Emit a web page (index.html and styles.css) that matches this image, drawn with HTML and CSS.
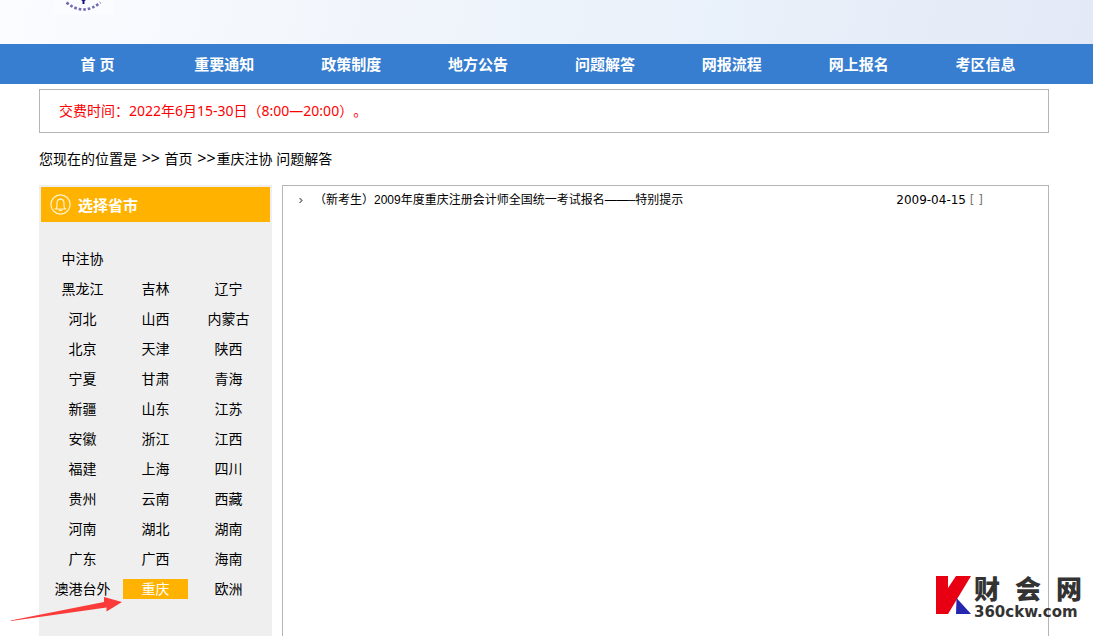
FILE: index.html
```html
<!DOCTYPE html>
<html lang="zh-CN">
<head>
<meta charset="utf-8">
<meta name="viewport" content="width=device-width, initial-scale=1">
<title>重庆注协 问题解答</title>
<link rel="stylesheet" href="styles.css">
</head>
<body>
<header class="banner">
  <svg class="emblem" width="60" height="14" viewBox="0 0 60 14" aria-hidden="true">
    <rect width="60" height="14" fill="#fbfcff"/>
    <path d="M12.500 2.500 Q29.500 16.500 46.500 2.500" fill="none" stroke="#6e6bb0" stroke-width="2.600" stroke-dasharray="2.600 2"/>
    <path d="M27 0h5l-1.500 1v3h-2V1z" fill="#16107c"/>
  </svg>
</header>
<nav class="nav">
  <a href="#">首 页</a>
  <a href="#">重要通知</a>
  <a href="#">政策制度</a>
  <a href="#">地方公告</a>
  <a href="#">问题解答</a>
  <a href="#">网报流程</a>
  <a href="#">网上报名</a>
  <a href="#">考区信息</a>
</nav>
<div class="page">
  <p class="notice">交费时间：2022年6月15-30日（8:00—20:00）。</p>
  <p class="crumbs">您现在的位置是 <span class="sep">&gt;&gt;</span> <a href="#">首页</a> <span class="sep">&gt;&gt;</span>重庆注协 问题解答</p>
  <div class="columns">
    <aside class="sidebar">
      <h2 class="sidebar-title">
        <svg width="21" height="21" viewBox="0 0 21 21" fill="none" stroke="#fff3cf" stroke-width="1.200" aria-hidden="true">
          <circle cx="10.500" cy="10.500" r="9.600"/>
          <path d="M4.500 15h12M6 15c1-1 1-2 1-5.500 0-2.500 1.300-4.300 3.500-4.300S14 7 14 9.500c0 3.500 0 4.500 1 5.500M10.500 5.200V4M9 15.200c0 2 3 2 3 0"/>
        </svg>
        选择省市
      </h2>
      <ul class="regions">
        <li class="row-end"><a href="#">中注协</a></li>
        <li><a href="#">黑龙江</a></li><li><a href="#">吉林</a></li><li><a href="#">辽宁</a></li>
        <li><a href="#">河北</a></li><li><a href="#">山西</a></li><li><a href="#">内蒙古</a></li>
        <li><a href="#">北京</a></li><li><a href="#">天津</a></li><li><a href="#">陕西</a></li>
        <li><a href="#">宁夏</a></li><li><a href="#">甘肃</a></li><li><a href="#">青海</a></li>
        <li><a href="#">新疆</a></li><li><a href="#">山东</a></li><li><a href="#">江苏</a></li>
        <li><a href="#">安徽</a></li><li><a href="#">浙江</a></li><li><a href="#">江西</a></li>
        <li><a href="#">福建</a></li><li><a href="#">上海</a></li><li><a href="#">四川</a></li>
        <li><a href="#">贵州</a></li><li><a href="#">云南</a></li><li><a href="#">西藏</a></li>
        <li><a href="#">河南</a></li><li><a href="#">湖北</a></li><li><a href="#">湖南</a></li>
        <li><a href="#">广东</a></li><li><a href="#">广西</a></li><li><a href="#">海南</a></li>
        <li><a href="#">澳港台外</a></li>
        <li class="marked"><a class="current" href="#">重庆</a>
          <svg class="arrow" width="114" height="28" viewBox="0 0 114 28" aria-hidden="true">
            <path d="M1.500 24.500 95 6V1l18 5-15.500 9.500V11.500L2 25z" fill="#fb3b3a"/>
          </svg>
        </li>
        <li><a href="#">欧洲</a></li>
      </ul>
    </aside>
    <main class="panel">
      <ul class="articles">
        <li>
          <svg width="4" height="5" viewBox="0 0 4 5" aria-hidden="true"><path d="M.5 0 3 2.500.5 5" fill="none" stroke="#777" stroke-width="1.300"/></svg>
          <a href="#">（新考生）2009年度重庆注册会计师全国统一考试报名——–特别提示</a>
          <span class="date">2009-04-15 <span class="brackets">[ ]</span></span>
        </li>
      </ul>
    </main>
  </div>
</div>
<div class="watermark">
  <svg width="35" height="38" viewBox="0 0 35 38" aria-hidden="true">
    <path d="M0 0h12v12L20 0h15L12 38H0z" fill="#e80012"/>
    <path d="M20.500 22 35 38H20z" fill="#2527ae"/>
  </svg>
  <div class="brand">
    <div class="brand-name"><span>财</span><span>会</span><span>网</span></div>
    <div class="brand-url">360ckw.com</div>
  </div>
</div>
</body>
</html>
```
FILE: styles.css
```css
* {
  box-sizing: border-box;
}

html {
  height: 100%;
}

body {
  position: relative;
  display: flex;
  flex-direction: column;
  min-height: 100%;
  margin: 0;
  background: #fff;
  color: #000;
  font: 14px/20px "Noto Sans", "Noto Sans CJK SC", sans-serif;
  text-spacing-trim: space-all;
}

a {
  color: inherit;
  text-decoration: none;
}

ul {
  margin: 0;
  padding: 0;
  list-style: none;
}

.banner {
  height: 44px;
  padding-left: 54px;
  background: linear-gradient(100deg, #fafcff 0%, #f1f5fb 35%, #e9f1fa 65%, #e3e9f6 100%);
}

.emblem {
  display: block;
}

.nav {
  display: grid;
  grid-template-columns: repeat(8, 1fr);
  padding: 0 44px 0 34px;
  background: #377dd0;
  color: #fff;
  font-size: 15px;
  font-weight: bold;
  line-height: 40px;
  text-align: center;
}

.page {
  display: flex;
  flex: 1;
  flex-direction: column;
  padding: 5px 44px 0 39px;
}

.notice {
  margin: 0;
  padding: 11px 19px;
  border: 1px solid #b5b5b5;
  color: #f00;
}

.crumbs {
  margin: 16px 0;
}

.sep {
  margin: 0 1px;
  font-size: 16px;
  line-height: 16px;
}

.columns {
  display: flex;
  flex: 1;
  gap: 10px;
}

.sidebar {
  flex: 0 0 233px;
  padding: 2px;
  background: #efefef;
}

.sidebar-title {
  display: flex;
  align-items: center;
  gap: 7px;
  height: 35px;
  margin: 0 0 22px;
  padding: 0 9px;
  background: #ffb300;
  color: #fff;
  font-size: 15px;
}

.regions {
  display: grid;
  grid-template-columns: repeat(3, 1fr);
  padding: 0 5px;
  text-align: center;
}

.regions li {
  padding: 5px 4px;
}

.regions a {
  display: block;
  white-space: nowrap;
}

.regions .row-end {
  width: 73px;
  grid-column: 1 / -1;
}

.regions .current {
  background: #ffb300;
  color: #fff;
}

.marked {
  position: relative;
}

.arrow {
  position: absolute;
  right: 69px;
  top: 22px;
}

.panel {
  flex: 1;
  border: 1px solid #b5b5b5;
  border-bottom: 0;
}

.articles li {
  display: flex;
  align-items: center;
  padding: 4px 65px 4px 16px;
  font-family: "Liberation Sans", "Noto Sans CJK SC", sans-serif;
  font-size: 12px;
}

.articles a {
  flex: 1;
  margin-left: 11px;
}

.date {
  font-family: "DejaVu Sans", sans-serif;
}

.brackets {
  color: #777;
}

.watermark {
  position: absolute;
  right: 11px;
  bottom: 16px;
  display: flex;
  align-items: flex-start;
  gap: 3px;
  color: #333;
}

.brand {
  min-width: 108px;
}

.brand-name {
  display: flex;
  justify-content: space-between;
  font: 900 26px/28px "Liberation Sans", "Noto Sans CJK SC", sans-serif;
}

.brand-url {
  font: bold 15px/16px "DejaVu Sans", sans-serif;
}
```
